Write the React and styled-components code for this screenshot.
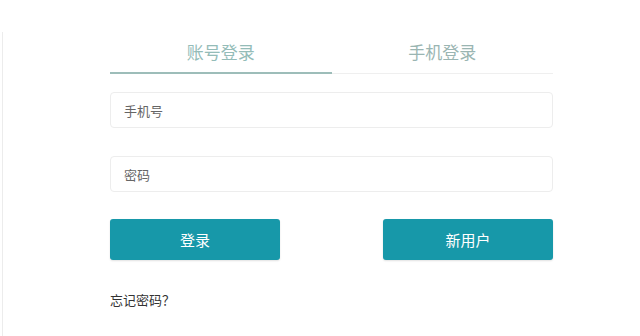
import React from "react";
import styled, { createGlobalStyle } from "styled-components";

const GlobalStyle = createGlobalStyle`
    body {
        margin: 0;
        background: #fff;
        font-family: "Noto Sans CJK SC", "Liberation Sans", sans-serif;
    }
`

const Page = styled.div`
    width: 640px;
    height: 336px;
    box-sizing: border-box;
    padding-top: 32px;
    overflow: hidden;
`

const Frame = styled.div`
    height: 100%;
    margin-left: 2px;
    border-left: 1px solid #ececec;
    padding-left: 107px;
`

const Form = styled.div`
    width: 443px;
    display: flex;
    flex-direction: column;
`

const Tabs = styled.div`
    display: flex;
    border-bottom: 1px solid #efefef;
    height: 41px;
`

const Tab = styled.div`
    flex: 1;
    display: flex;
    justify-content: center;
    align-items: center;
    font-size: 17px;
    color: ${p => p.active ? "#94bcb8" : "#9ab5b2"};
    margin-bottom: -1px;
    border-bottom: 2px solid ${p => p.active ? "#9dbdb9" : "transparent"};
    padding-bottom: 1px;
`

const Field = styled.input`
    box-sizing: border-box;
    width: 100%;
    height: 36px;
    border: 1px solid #ededed;
    border-radius: 4px;
    padding: 0 13px;
    font-family: inherit;
    font-size: 13px;
    color: #555;
    margin-top: ${p => p.top}px;
    outline: none;
    &::placeholder {
        color: #666;
    }
`

const Buttons = styled.div`
    display: flex;
    justify-content: space-between;
    margin-top: 27px;
`

const Button = styled.button`
    width: 170px;
    height: 41px;
    border: none;
    border-radius: 3px;
    background: #1798a9;
    color: #fff;
    font-family: inherit;
    font-size: 15px;
    box-shadow: 0 1px 2px rgba(0,0,0,0.12);
`

const Forgot = styled.div`
    margin-top: 30px;
    font-size: 13px;
    color: #333;
`

export default function App() {
    return (
        <Page>
            <GlobalStyle />
            <Frame>
                <Form>
                    <Tabs>
                        <Tab active>账号登录</Tab>
                        <Tab>手机登录</Tab>
                    </Tabs>
                    <Field top={18} placeholder="手机号" />
                    <Field top={28} type="password" placeholder="密码" />
                    <Buttons>
                        <Button>登录</Button>
                        <Button>新用户</Button>
                    </Buttons>
                    <Forgot>忘记密码？</Forgot>
                </Form>
            </Frame>
        </Page>
    )
}
